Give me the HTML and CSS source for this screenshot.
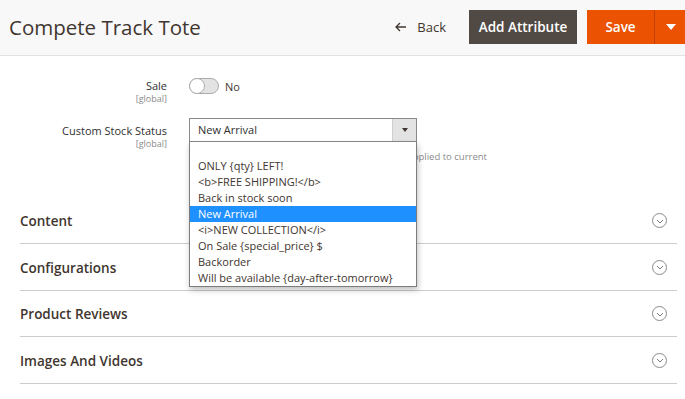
FILE: index.html
```html
<!DOCTYPE html>
<html>
<head>
<meta charset="utf-8">
<link rel="stylesheet" href="styles.css">
</head>
<body>
<header class="page-header">
  <h1 class="page-title">Compete Track Tote</h1>
  <div class="actions">
    <button class="btn-back">
      <svg width="12" height="10" viewBox="0 0 12 10"><path d="M5 1 L1 5 L5 9 M1 5 H11" fill="none" stroke="#41362f" stroke-width="1.3"/></svg>
      <span>Back</span>
    </button>
    <button class="btn-secondary">Add Attribute</button>
    <div class="split">
      <button class="btn-primary">Save</button>
      <button class="btn-toggle"><span class="tri"></span></button>
    </div>
  </div>
</header>

<main class="form">
  <div class="field field-sale">
    <div class="label">
      <span class="label-text">Sale</span>
      <span class="scope">[global]</span>
    </div>
    <div class="control">
      <span class="switch"><span class="knob"></span></span>
      <span class="switch-text">No</span>
    </div>
  </div>

  <div class="field field-status">
    <div class="label">
      <span class="label-text">Custom Stock Status</span>
      <span class="scope">[global]</span>
    </div>
    <div class="control control-select">
      <div class="select">
        <span class="select-value">New Arrival</span>
        <span class="select-arrow"><span class="tri-dark"></span></span>
      </div>
      <div class="note">Will be applied to current</div>
      <ul class="dropdown">
        <li>&nbsp;</li>
        <li>ONLY {qty} LEFT!</li>
        <li>&lt;b&gt;FREE SHIPPING!&lt;/b&gt;</li>
        <li>Back in stock soon</li>
        <li class="selected">New Arrival</li>
        <li>&lt;i&gt;NEW COLLECTION&lt;/i&gt;</li>
        <li>On Sale {special_price} $</li>
        <li>Backorder</li>
        <li>Will be available {day-after-tomorrow}</li>
      </ul>
    </div>
  </div>
</main>

<section class="sections">
  <div class="section"><span class="section-title">Content</span><span class="circle"><svg width="8" height="5" viewBox="0 0 8 5"><path d="M1 1 L4 4 L7 1" fill="none" stroke="#7a7a7a" stroke-width="1"/></svg></span></div>
  <div class="section"><span class="section-title">Configurations</span><span class="circle"><svg width="8" height="5" viewBox="0 0 8 5"><path d="M1 1 L4 4 L7 1" fill="none" stroke="#7a7a7a" stroke-width="1"/></svg></span></div>
  <div class="section"><span class="section-title">Product Reviews</span><span class="circle"><svg width="8" height="5" viewBox="0 0 8 5"><path d="M1 1 L4 4 L7 1" fill="none" stroke="#7a7a7a" stroke-width="1"/></svg></span></div>
  <div class="section"><span class="section-title">Images And Videos</span><span class="circle"><svg width="8" height="5" viewBox="0 0 8 5"><path d="M1 1 L4 4 L7 1" fill="none" stroke="#7a7a7a" stroke-width="1"/></svg></span></div>
</section>
</body>
</html>
```

FILE: styles.css
```css
* { box-sizing: border-box; }
html, body { margin: 0; padding: 0; }
body {
  width: 685px;
  overflow: hidden;
  font-family: "Open Sans", "Noto Sans", sans-serif;
  color: #303030;
  background: #fff;
}
button { font-family: inherit; border: 0; cursor: pointer; }

.page-header {
  height: 56px;
  background: #f8f8f8;
  border-bottom: 1px solid #e3e3e3;
  display: flex;
  align-items: center;
  justify-content: space-between;
  padding-left: 9px;
}
.page-title {
  margin: 0;
  font-size: 20.5px;
  font-weight: 400;
  color: #41362f;
  margin-top: -1px;
}
.actions {
  display: flex;
  align-items: center;
  height: 100%;
}
.btn-back {
  background: transparent;
  display: flex;
  align-items: center;
  gap: 10px;
  font-size: 13px;
  color: #41362f;
  padding: 0;
  margin-right: 23px;
  margin-top: -1px;
}
.btn-secondary {
  background: #514943;
  color: #fff;
  font-size: 13.5px;
  font-weight: 600;
  height: 34px;
  width: 108px;
  margin-top: -1px;
  margin-right: 10px;
}
.split {
  display: flex;
  height: 34px;
  margin-top: -1px;
}
.btn-primary {
  background: #eb5202;
  color: #fff;
  font-size: 13.5px;
  font-weight: 600;
  width: 68px;
  height: 34px;
  border-right: 1px solid #c14200;
}
.btn-toggle {
  background: #eb5202;
  width: 30px;
  height: 34px;
  display: flex;
  align-items: center;
  justify-content: center;
  padding: 0 0 0 2px;
}
.tri {
  width: 0; height: 0;
  border-left: 5px solid transparent;
  border-right: 5px solid transparent;
  border-top: 6px solid #fff;
}

.form { padding-top: 22px; height: 142px; }
.field { display: flex; }
.label {
  width: 167px;
  display: flex;
  flex-direction: column;
  align-items: flex-end;
  margin-right: 22px;
}
.label-text { font-size: 11px; line-height: 14px; color: #303030; }
.scope { font-size: 9px; line-height: 10px; color: #8a8a8a; margin-top: 1px; }
.field-sale .label { padding-top: 1px; }
.field-sale .control { display: flex; align-items: center; height: 16px; }
.switch {
  width: 30px;
  height: 16px;
  border: 1px solid #adadad;
  border-radius: 9px;
  background: #e3e3e3;
  display: flex;
  align-items: center;
}
.knob {
  width: 16px;
  height: 16px;
  border-radius: 50%;
  background: #fff;
  border: 1px solid #adadad;
  margin-left: -1px;
}
.switch-text { font-size: 11px; color: #41362f; margin-left: 6px; }

.field-status { margin-top: 14px; }
.field-status .label { padding-top: 6px; }
.control-select { position: relative; width: 228px; }
.select {
  height: 24px;
  border: 1px solid #8a8a8a;
  display: flex;
  align-items: stretch;
  background: #fff;
}
.select-value { flex: 1; font-size: 11px; line-height: 22px; padding-left: 8px; color: #303030; }
.select-arrow {
  width: 24px;
  background: #e3e3e3;
  border-left: 1px solid #cfcfcf;
  display: flex;
  align-items: center;
  justify-content: center;
}
.tri-dark {
  width: 0; height: 0;
  border-left: 3px solid transparent;
  border-right: 3px solid transparent;
  border-top: 4px solid #41362f;
}
.note {
  width: 298px;
  text-align: right;
  font-size: 9.5px;
  color: #8a8a8a;
  margin-top: 8px;
}
.dropdown {
  position: absolute;
  left: 0;
  top: 24px;
  width: 228px;
  margin: 0;
  padding: 0;
  list-style: none;
  background: #fff;
  border: 1px solid #7d7d7d;
  border-top: 0;
  box-shadow: 1px 3px 6px rgba(0,0,0,0.25);
}
.dropdown li {
  height: 16px;
  line-height: 16px;
  font-size: 11px;
  padding-left: 8px;
  color: #41362f;
  white-space: nowrap;
}
.dropdown li.selected { background: #1e90ff; color: #fff; }

.sections { margin: 0 8px 0 20px; }
.section {
  height: 46px;
  border-bottom: 1px solid #cccccc;
  display: flex;
  align-items: center;
  justify-content: space-between;
  padding-right: 10px;
}
.section:nth-child(2), .section:nth-child(4) { height: 47px; }
.section-title { font-size: 13.5px; font-weight: 600; color: #41362f; margin-top: 1px; }
.circle {
  width: 15px;
  height: 15px;
  border: 1px solid #8a8a8a;
  border-radius: 50%;
  display: flex;
  align-items: center;
  justify-content: center;
  padding-top: 1px;
}
```
